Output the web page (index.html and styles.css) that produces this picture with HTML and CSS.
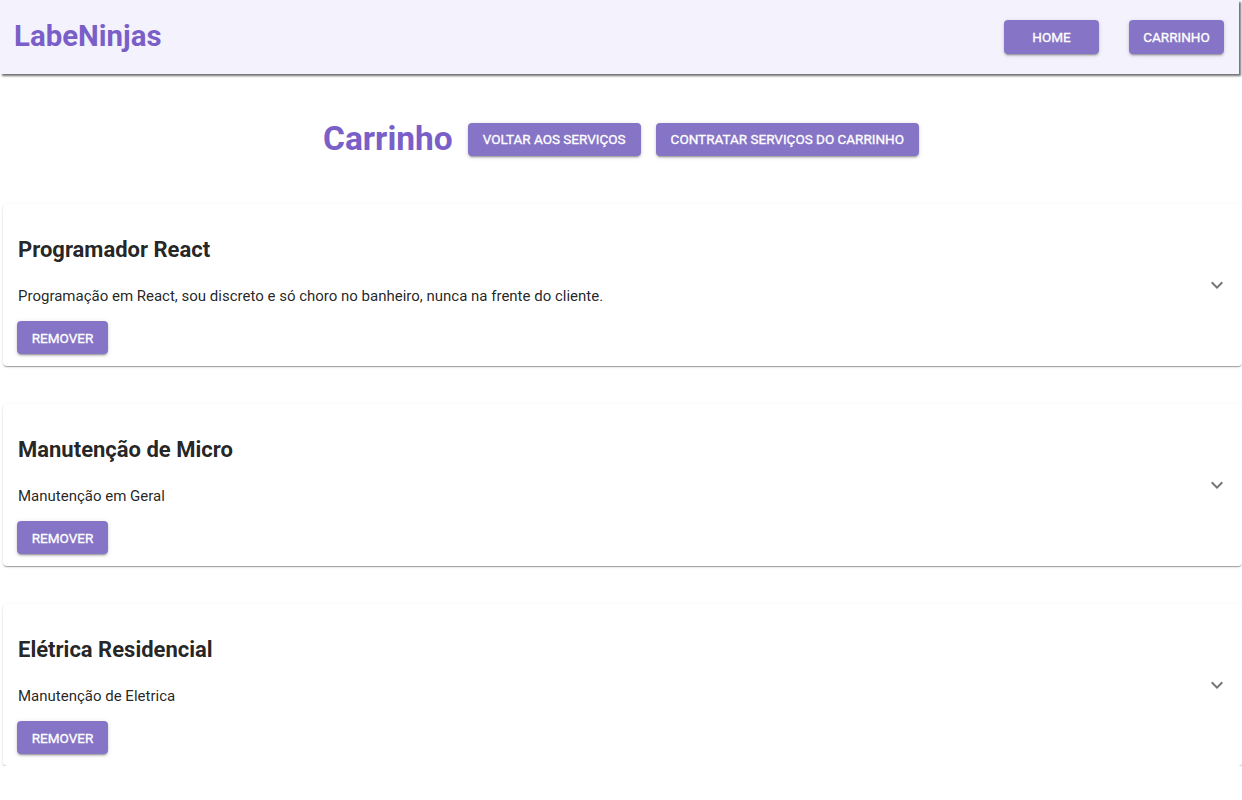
FILE: index.html
```html
<!DOCTYPE html>
<html lang="pt-BR">
<head>
<meta charset="utf-8">
<title>LabeNinjas - Carrinho</title>
<link rel="stylesheet" href="styles.css">
</head>
<body>
<header class="topbar">
  <h1 class="logo">LabeNinjas</h1>
  <nav class="nav">
    <button class="btn nav-btn">Home</button>
    <button class="btn nav-btn">Carrinho</button>
  </nav>
</header>
<main class="page">
  <section class="cart-head">
    <h2 class="cart-title">Carrinho</h2>
    <button class="btn">Voltar aos serviços</button>
    <button class="btn">Contratar serviços do carrinho</button>
  </section>
  <section class="list">
    <article class="card">
      <div class="card-body">
        <h3 class="card-title">Programador React</h3>
        <p class="card-desc">Programação em React, sou discreto e só choro no banheiro, nunca na frente do cliente.</p>
        <button class="btn">Remover</button>
      </div>
      <span class="chev"><svg viewBox="0 0 24 24" width="24" height="24"><path d="M16.59 8.59 12 13.17 7.41 8.59 6 10l6 6 6-6z"/></svg></span>
    </article>
    <article class="card">
      <div class="card-body">
        <h3 class="card-title">Manutenção de Micro</h3>
        <p class="card-desc">Manutenção em Geral</p>
        <button class="btn">Remover</button>
      </div>
      <span class="chev"><svg viewBox="0 0 24 24" width="24" height="24"><path d="M16.59 8.59 12 13.17 7.41 8.59 6 10l6 6 6-6z"/></svg></span>
    </article>
    <article class="card">
      <div class="card-body">
        <h3 class="card-title">Elétrica Residencial</h3>
        <p class="card-desc">Manutenção de Eletrica</p>
        <button class="btn">Remover</button>
      </div>
      <span class="chev"><svg viewBox="0 0 24 24" width="24" height="24"><path d="M16.59 8.59 12 13.17 7.41 8.59 6 10l6 6 6-6z"/></svg></span>
    </article>
  </section>
</main>
</body>
</html>
```

FILE: styles.css
```css
* { box-sizing: border-box; }
html, body { margin: 0; padding: 0; background: #ffffff; }
body {
  font-family: Roboto, "Liberation Sans", Arial, sans-serif;
  color: rgba(0, 0, 0, 0.87);
}
.topbar {
  width: calc(100% - 3px);
  height: 74px;
  background: #f4f3fd;
  box-shadow: 2px 2px 2px #707070;
  display: flex;
  align-items: center;
  justify-content: space-between;
  padding: 0 15px 0 14px;
}
.logo {
  margin: 0;
  font-size: 29.4px;
  font-weight: 700;
  color: #7a5fc8;
  line-height: 1;
}
.nav { display: flex; gap: 30px; }
.btn {
  font-family: Roboto, "Liberation Sans", Arial, sans-serif;
  font-size: 13.5px;
  font-weight: 400;
  letter-spacing: 0;
  -webkit-text-stroke: 0.3px #ffffff;
  text-transform: uppercase;
  color: #ffffff;
  background: #8675c6;
  border: 0;
  border-radius: 4px;
  height: 33px;
  padding: 0 15px;
  box-shadow: 0 3px 1px -2px rgba(0,0,0,0.2), 0 2px 2px 0 rgba(0,0,0,0.14), 0 1px 5px 0 rgba(0,0,0,0.12);
  cursor: pointer;
}
.nav-btn { width: 95px; height: 34px; padding: 0; }
.page { padding-top: 48px; }
.cart-head {
  display: flex;
  align-items: center;
  justify-content: center;
  gap: 15px;
  height: 34px;
}
.cart-title {
  margin: 0;
  font-size: 33.5px;
  font-weight: 700;
  color: #7a5fc8;
  line-height: 1;
}
.list {
  margin-top: 48px;
  display: flex;
  flex-direction: column;
  gap: 38px;
  padding-left: 3px;
}
.card {
  height: 162px;
  background: #ffffff;
  border-radius: 4px;
  box-shadow: 0 2px 1px -1px rgba(0,0,0,0.2), 0 1px 1px 0 rgba(0,0,0,0.14), 0 1px 3px 0 rgba(0,0,0,0.12);
  display: flex;
  align-items: center;
  justify-content: space-between;
  padding: 0 13px 0 14px;
}
.card-body {
  align-self: flex-start;
  display: flex;
  flex-direction: column;
  align-items: flex-start;
  padding-top: 33px;
}
.card-title {
  margin: 0 0 0 1px;
  font-size: 22px;
  font-weight: 700;
  line-height: 26px;
  color: rgba(0,0,0,0.87);
}
.card-desc {
  margin: 21px 0 13px 1px;
  font-size: 15px;
  line-height: 24px;
}
.card .btn { width: 91px; padding: 0; }
.chev { display: flex; width: 24px; height: 24px; }
.chev svg { fill: rgba(0,0,0,0.54); }
```
